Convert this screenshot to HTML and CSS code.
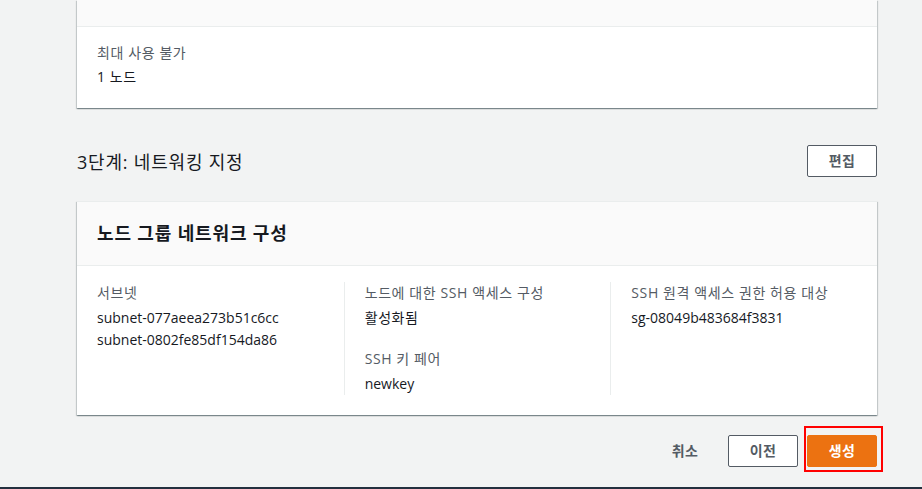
FILE: index.html
```html
<!DOCTYPE html>
<html lang="ko">
<head>
<meta charset="utf-8">
<title>노드 그룹 검토</title>
<link rel="stylesheet" href="styles.css">
</head>
<body>
<main class="page">
  <section class="card card-top">
    <div class="card-header card-header-cut"></div>
    <div class="card-body single">
      <div class="kv">
        <div class="kv-label">최대 사용 불가</div>
        <div class="kv-value ko">1 노드</div>
      </div>
    </div>
  </section>

  <div class="step-head">
    <h2 class="step-title">3단계: 네트워킹 지정</h2>
    <button class="btn">편집</button>
  </div>

  <section class="card">
    <div class="card-header">
      <h3 class="card-title">노드 그룹 네트워크 구성</h3>
    </div>
    <div class="card-body">
      <div class="cols">
        <div class="col">
          <div class="kv">
            <div class="kv-label">서브넷</div>
            <div class="kv-value">subnet-077aeea273b51c6cc</div>
            <div class="kv-value">subnet-0802fe85df154da86</div>
          </div>
        </div>
        <div class="col col-div">
          <div class="kv">
            <div class="kv-label">노드에 대한 SSH 액세스 구성</div>
            <div class="kv-value ko">활성화됨</div>
          </div>
          <div class="kv kv-next">
            <div class="kv-label">SSH 키 페어</div>
            <div class="kv-value">newkey</div>
          </div>
        </div>
        <div class="col col-div">
          <div class="kv">
            <div class="kv-label">SSH 원격 액세스 권한 허용 대상</div>
            <div class="kv-value">sg-08049b483684f3831</div>
          </div>
        </div>
      </div>
    </div>
  </section>

  <div class="actions">
    <button class="btn btn-link">취소</button>
    <button class="btn">이전</button>
    <span class="highlight-wrap">
      <button class="btn btn-primary">생성</button>
      <span class="highlight"></span>
    </span>
  </div>
</main>
<footer class="footer"></footer>
</body>
</html>
```

FILE: styles.css
```css
html, body {
  margin: 0;
  padding: 0;
  overflow: hidden;
  height: 100%;
}

body {
  background: #f2f3f3;
  font-family: "Open Sans", "Noto Sans CJK KR", sans-serif;
  font-size: 14px;
  line-height: 22px;
  color: #16191f;
}

.page {
  width: 800px;
  margin-left: 77px;
}

.card {
  background: #ffffff;
  box-shadow: 0 1px 1px 0 rgba(0, 28, 36, 0.3),
              1px 1px 1px 0 rgba(0, 28, 36, 0.15),
              -1px 1px 1px 0 rgba(0, 28, 36, 0.15);
  border-top: 1px solid #eaeded;
}

.card-top {
  border-top: none;
}

.card-header {
  background: #fafafa;
  border-bottom: 1px solid #eaeded;
  padding: 19px 20px 20px;
}

.card-header-cut {
  padding: 0;
  box-sizing: border-box;
  height: 27px;
}

.card-title {
  margin: 0;
  font-size: 18px;
  line-height: 24px;
  font-weight: 700;
  color: #16191f;
  letter-spacing: 0.85px;
}

.card-body {
  padding: 16px 0 20px;
}

.card-body.single {
  padding: 15px 20px 20px;
}

.cols {
  display: grid;
  grid-template-columns: 1fr 1fr 1fr;
}

.col {
  padding: 0 20px;
}

.col-div {
  border-left: 1px solid #eaeded;
}

.kv-label {
  color: #545b64;
  margin-bottom: 3px;
  letter-spacing: 0.6px;
}

.ko {
  letter-spacing: 0.6px;
}

.card-body.single .kv-label {
  margin-bottom: 2px;
}

.kv-next {
  margin-top: 19px;
}

.step-head {
  display: flex;
  justify-content: space-between;
  align-items: center;
  margin-top: 37px;
  margin-bottom: 24px;
  height: 32px;
}

.step-title {
  margin: 0;
  font-size: 18px;
  line-height: 22px;
  font-weight: 400;
  color: #16191f;
  padding-top: 1px;
  letter-spacing: 0.8px;
}

.btn {
  font-family: "Open Sans", "Noto Sans CJK KR", sans-serif;
  font-size: 14px;
  line-height: 22px;
  font-weight: 700;
  color: #545b64;
  background: #ffffff;
  border: 1px solid #545b64;
  border-radius: 2px;
  padding: 4px 20px;
  height: 32px;
  min-width: 70px;
  letter-spacing: 0.4px;
  cursor: pointer;
}

.btn-link {
  background: transparent;
  border-color: transparent;
}

.btn-primary {
  background: #ec7211;
  border-color: #ec7211;
  color: #ffffff;
  display: block;
}

.actions {
  display: flex;
  justify-content: flex-end;
  align-items: center;
  gap: 8px;
  margin-top: 20px;
  height: 32px;
}

.highlight-wrap {
  position: relative;
  display: block;
  margin-left: 1px;
}

.highlight {
  position: absolute;
  top: -9px;
  left: -3px;
  right: -6px;
  bottom: -5px;
  border: 2px solid #ff0000;
  pointer-events: none;
}

.footer {
  margin-top: 20px;
  height: 2px;
  background: #232f3e;
}
```
